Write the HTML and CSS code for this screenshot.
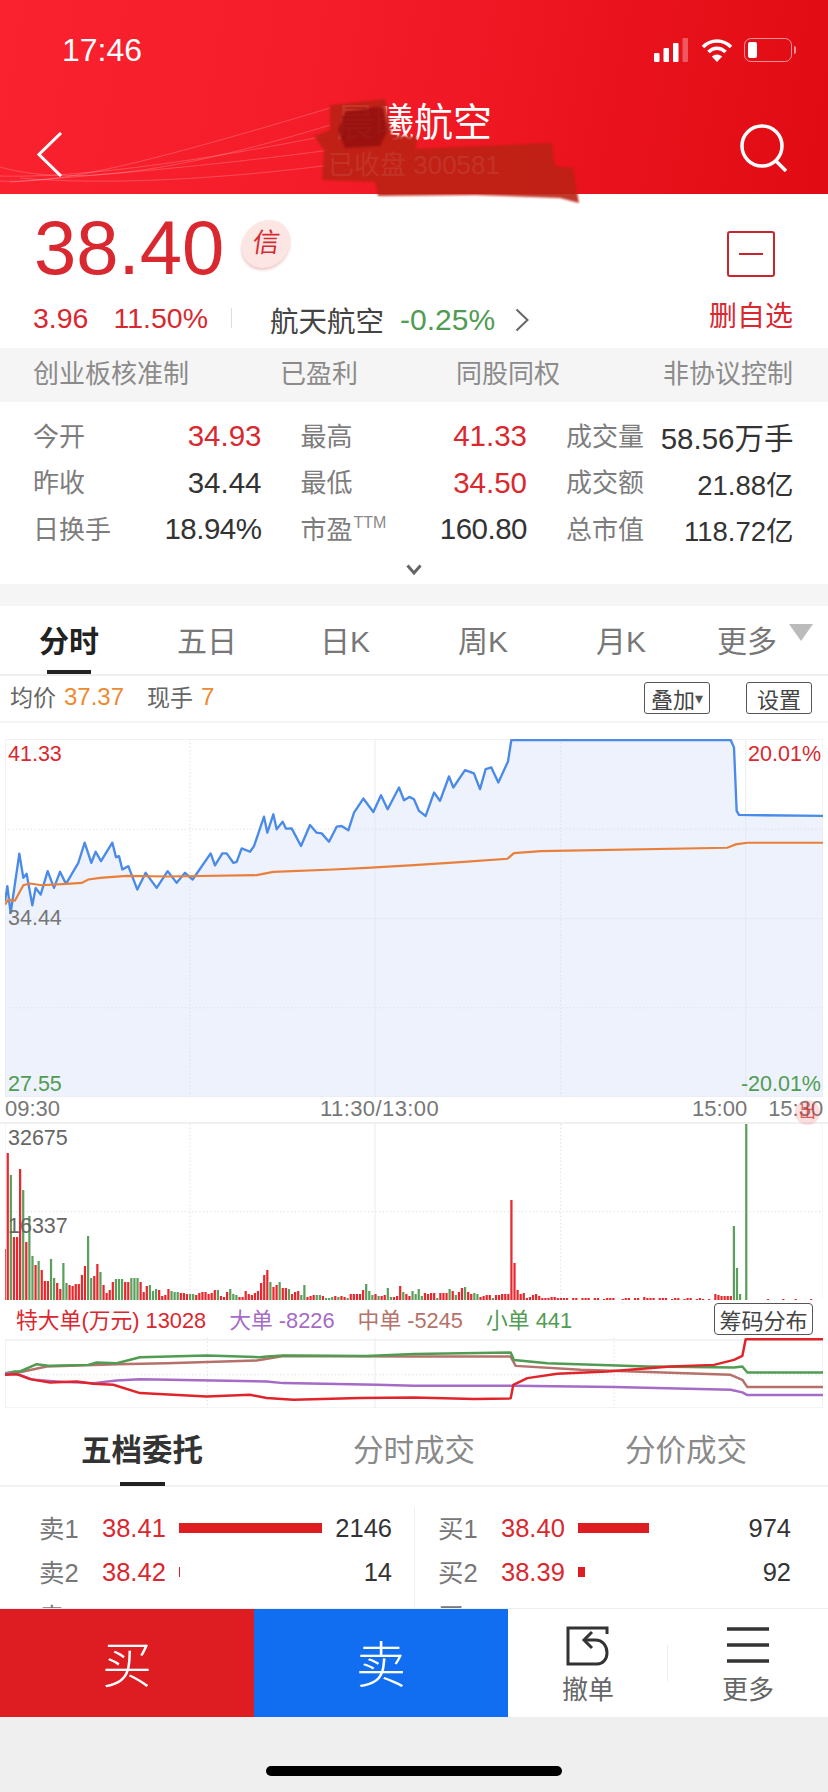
FILE: index.html
```html
<!DOCTYPE html>
<html lang="zh-CN">
<head>
<meta charset="utf-8">
<title>晨曦航空</title>
<link rel="stylesheet" href="styles.css">
</head>
<body>
<div class="page">
  <header class="hero">
    <svg class="swoosh" viewBox="0 0 828 194" aria-hidden="true">
      <path d="M0 181C60 184 140 165 330 108"/>
      <path d="M0 167C40 178 120 190 330 125"/>
      <path d="M0 176C70 178 180 165 330 135"/>
      <path d="M10 182C90 176 220 165 330 150"/>
      <path d="M20 178C110 186 230 178 330 165"/>
    </svg>
    <div class="status">
      <span class="clock">17:46</span>
      <div class="status-icons">
        <svg class="signal" width="36" height="24" viewBox="0 0 36 24"><rect x="0" y="15" width="5.5" height="9" rx="1"/><rect x="9.5" y="10" width="5.5" height="14" rx="1"/><rect x="19" y="5" width="5.5" height="19" rx="1"/><rect class="dim" x="28.5" y="0" width="5.5" height="24" rx="1"/></svg>
        <svg class="wifi" width="32" height="24" viewBox="0 0 32 24"><path d="M2 9C10 1 22 1 30 9"/><path d="M7.5 14C12.500 9 19.500 9 24.500 14"/><path class="wifi-dot" d="M16 24L10.800 18.500C14 15.800 18 15.800 21.200 18.500Z"/></svg>
        <div class="battery"><div class="battery-level"></div></div>
      </div>
    </div>
    <nav class="nav">
      <svg class="back" width="26" height="45" viewBox="0 0 26 45"><path d="M24 1L2 22.500L24 44"/></svg>
      <div class="title-block">
        <div class="title">晨曦航空</div>
        <div class="subtitle">已收盘 300581</div>
      </div>
      <svg class="search" width="48" height="48" viewBox="0 0 48 48"><circle cx="22" cy="22" r="20"/><path d="M35 36L46 47"/></svg>
    </nav>
    <svg class="scribble" viewBox="0 0 828 210" aria-hidden="true">
      <path class="ink-a" d="M330 105L385 99L392 135L417 137L416 149L385 150L552 143L555 166L573 168L579 203L560 198L476 195L378 196L375 182L322 180L324 150L314 136L330 130Z"/>
      <path class="ink-b" d="M345 112L382 106L388 130L380 146L345 148L338 130Z"/>
    </svg>
  </header>

  <section class="quote">
    <div class="quote-main">
      <div class="price-line">
        <span class="price">38.40</span>
        <span class="badge">信</span>
      </div>
      <div class="change-line">
        <span class="chg">3.96</span>
        <span class="chg">11.50%</span>
        <i class="vline"></i>
        <span class="sector">航天航空</span>
        <span class="sector-chg">-0.25%</span>
        <svg class="more-chev" width="14" height="24" viewBox="0 0 14 24"><path d="M1.500 1.500L12.500 12L1.500 22.500"/></svg>
      </div>
    </div>
    <div class="watch">
      <div class="watch-box"><i></i></div>
      <span>删自选</span>
    </div>
  </section>

  <section class="tags">
    <span>创业板核准制</span><span>已盈利</span><span>同股同权</span><span>非协议控制</span>
  </section>

  <section class="stats">
    <div class="stat"><label>今开</label><b class="up">34.93</b></div>
    <div class="stat"><label>最高</label><b class="up">41.33</b></div>
    <div class="stat"><label>成交量</label><b>58.56万手</b></div>
    <div class="stat"><label>昨收</label><b>34.44</b></div>
    <div class="stat"><label>最低</label><b class="up">34.50</b></div>
    <div class="stat"><label>成交额</label><b class="small-val">21.88亿</b></div>
    <div class="stat"><label>日换手</label><b class="tight">18.94%</b></div>
    <div class="stat"><label>市盈<sup>TTM</sup></label><b class="tight">160.80</b></div>
    <div class="stat"><label>总市值</label><b class="small-val">118.72亿</b></div>
  </section>
  <div class="expand"><svg width="16" height="11" viewBox="0 0 16 11"><path d="M1.500 1.500L8 9L14.500 1.500"/></svg></div>
  <div class="band"></div>

  <section class="tabs">
    <span class="tab active">分时</span><span class="tab">五日</span><span class="tab">日K</span><span class="tab">周K</span><span class="tab">月K</span>
    <span class="tab tab-more">更多<i class="tri"></i></span>
  </section>

  <section class="info">
    <span class="info-label">均价</span><span class="orange">37.37</span>
    <span class="info-label info-gap">现手</span><span class="orange">7</span>
    <span class="btn btn-first">叠加<small>▾</small></span>
    <span class="btn btn-second">设置</span>
  </section>

  <section class="price-chart">
    <svg viewBox="15 25 2454 1070" preserveAspectRatio="none">
      <path class="area" d="M15 1095V510L22 465L32 545L58 368L70 440L80 428L97 522L107 470L122 490L143 420L162 470L180 422L198 458L235 395L254 335L274 395L287 362L303 390L337 335L348 378L357 375L367 415L385 405L412 475L437 425L470 470L503 420L530 455L555 425L578 445L632 367L645 403L667 367L680 367L700 395L710 392L725 352L750 362L762 345L792 257L802 305L820 250L830 295L848 272L858 293L875 292L903 345L930 282L950 305L965 307L987 332L1010 287L1025 285L1045 298L1062 245L1090 203L1120 243L1143 193L1163 235L1197 170L1212 208L1228 198L1242 205L1257 240L1277 255L1302 185L1320 210L1347 137L1360 170L1395 118L1422 128L1440 175L1457 115L1474 110L1495 155L1524 92L1534 28L2192 28L2202 50L2210 240L2217 252L2469 255V1095Z"/>
      <path class="grid-dot" d="M570 25V1095M1682 25V1095M15 295H2469M15 828H2469"/>
      <path class="grid-solid" d="M1125 25V1095M2237 25V1095M15 562H2469"/>
      <rect class="frame" x="15" y="25" width="2454" height="1070"/>
      <path class="line-blue" d="M15 510L22 465L32 545L58 368L70 440L80 428L97 522L107 470L122 490L143 420L162 470L180 422L198 458L235 395L254 335L274 395L287 362L303 390L337 335L348 378L357 375L367 415L385 405L412 475L437 425L470 470L503 420L530 455L555 425L578 445L632 367L645 403L667 367L680 367L700 395L710 392L725 352L750 362L762 345L792 257L802 305L820 250L830 295L848 272L858 293L875 292L903 345L930 282L950 305L965 307L987 332L1010 287L1025 285L1045 298L1062 245L1090 203L1120 243L1143 193L1163 235L1197 170L1212 208L1228 198L1242 205L1257 240L1277 255L1302 185L1320 210L1347 137L1360 170L1395 118L1422 128L1440 175L1457 115L1474 110L1495 155L1524 92L1534 28L2192 28L2202 50L2210 240L2217 252L2469 255"/>
      <path class="line-orange" d="M15 520L25 505L45 508L70 462L90 457L125 462L200 458L245 455L265 445L300 440L380 434L500 436L770 432L820 422L1000 415L1100 410L1190 405L1242 402L1392 392L1522 383L1542 366L1622 360L2182 350L2207 340L2242 335L2469 335"/>
    </svg>
    <span class="axis-l top up">41.33</span>
    <span class="axis-l mid grey">34.44</span>
    <span class="axis-l bot green">27.55</span>
    <span class="axis-r top up">20.01%</span>
    <span class="axis-r bot green">-20.01%</span>
  </section>

  <section class="times">
    <span>09:30</span><span class="t-mid">11:30/13:00</span><span class="t-end">15:00</span><span class="t-close">15:30</span>
    <i class="touch">出</i>
  </section>

  <section class="volume-chart">
    <svg viewBox="15 42 2454 528" preserveAspectRatio="none">
      <path class="grid-dot" d="M570 42V570M1682 42V570M15 305H2469"/>
      <path class="grid-solid" d="M1125 42V570"/>
      <path class="frame-open" d="M15 42V570M2469 42V570"/>
      <g transform="translate(14 570) scale(9.27 -3)">
        <path class="bar-red" d="M0 0V51M1 0V147M3 0V63M4 0V63M5 0V131M7 0V58M10 0V35M12 0V30M13 0V19M14 0V19M17 0V17M18 0V11M21 0V15M22 0V14M23 0V16M24 0V16M25 0V25M26 0V34M29 0V24M30 0V36M32 0V15M33 0V7M34 0V10M35 0V18M39 0V18M40 0V18M44 0V18M45 0V8M46 0V14M50 0V10M51 0V4M52 0V5M53 0V11M57 0V7M58 0V7M59 0V6M62 0V5M63 0V7M64 0V8M65 0V8M66 0V6M67 0V7M68 0V10M70 0V4M71 0V3M72 0V8M76 0V3M77 0V3M78 0V9M79 0V6M80 0V5M81 0V7M82 0V9M83 0V17M84 0V25M85 0V30M87 0V13M88 0V15M90 0V12M91 0V12M93 0V6M94 0V8M95 0V9M98 0V3M99 0V4M100 0V5M103 0V4M107 0V4M109 0V4M110 0V3M112 0V6M113 0V6M114 0V6M115 0V6M116 0V10M120 0V6M122 0V4M123 0V5M126 0V3M127 0V4M128 0V14M130 0V6M131 0V4M136 0V7M137 0V6M138 0V7M139 0V7M141 0V7M142 0V7M143 0V7M145 0V9M147 0V8M148 0V12M150 0V8M151 0V6M154 0V3M155 0V4M156 0V5M157 0V5M159 0V5M160 0V5M161 0V6M162 0V6M163 0V6M164 0V100M165 0V37M166 0V10M167 0V6M168 0V7M169 0V2M170 0V3M171 0V5M172 0V6M173 0V4M174 0V2M175 0V2M176 0V2M177 0V3M178 0V3M179 0V2M180 0V2M181 0V2M182 0V2M184 0V2M185 0V2M187 0V2M188 0V2M189 0V2M191 0V2M192 0V2M194 0V1M195 0V2M196 0V2M197 0V2M200 0V1M201 0V2M202 0V2M204 0V2M205 0V2M207 0V3M208 0V2M209 0V2M210 0V2M212 0V2M213 0V2M214 0V2M216 0V1M217 0V2M218 0V2M220 0V1M221 0V2M222 0V2M224 0V1M225 0V2M226 0V1M228 0V1M230 0V6M231 0V5M232 0V4M233 0V4M234 0V4M235 0V4M247 0V1M252 0V1M256 0V1M261 0V1"/>
        <path class="bar-green" d="M2 0V125M6 0V110M8 0V84M9 0V44M11 0V39M15 0V41M16 0V22M19 0V37M20 0V17M27 0V64M28 0V22M31 0V28M36 0V21M37 0V21M38 0V21M41 0V22M42 0V22M43 0V22M47 0V15M48 0V9M49 0V11M54 0V9M55 0V8M56 0V8M60 0V6M61 0V6M69 0V10M73 0V11M74 0V6M75 0V5M86 0V18M89 0V18M92 0V11M96 0V5M97 0V15M101 0V5M102 0V5M104 0V2M105 0V2M106 0V3M108 0V3M111 0V2M117 0V16M118 0V9M119 0V5M121 0V4M124 0V12M125 0V3M129 0V8M132 0V9M133 0V6M134 0V11M135 0V4M140 0V2M144 0V11M146 0V5M149 0V13M152 0V7M153 0V6M158 0V2M236 0V74M237 0V32M238 0V6M240 0V176"/>
      </g>
    </svg>
    <span class="vol-label vol-top">32675</span>
    <span class="vol-label vol-mid">16337</span>
  </section>

  <section class="flow-legend">
    <span class="up">特大单(万元) 13028</span>
    <span class="purple">大单 -8226</span>
    <span class="brown">中单 -5245</span>
    <span class="green">小单 441</span>
    <span class="btn btn-chip">筹码分布</span>
  </section>

  <section class="flow-chart">
    <svg viewBox="15 684 2454 211" preserveAspectRatio="none">
      <path class="grid-dot" d="M622 684V895M1842 684V895M15 795H2469"/>
      <path class="grid-solid" d="M1125 684V895"/>
      <rect class="frame" x="15" y="690" width="2454" height="205"/>
      <path class="f-brown" d="M15 795L70 785L140 770L350 763L500 760L770 752L850 738L1242 740L1532 740L1547 768L1742 780L2192 795L2227 810L2242 832L2469 832"/>
      <path class="f-green" d="M15 790L45 785L60 785L110 763L150 768L265 765L290 758L350 760L420 742L620 737L780 742L800 740L850 737L1100 738L1242 732L1532 728L1542 750L1642 760L1942 770L2202 773L2227 770L2242 788L2469 788"/>
      <path class="f-purple" d="M15 790L60 795L100 810L200 817L280 820L350 812L420 808L800 815L850 820L1130 825L1242 828L1542 828L1842 832L2192 840L2227 848L2242 856L2469 856"/>
      <path class="f-red" d="M15 795L50 793L90 808L150 818L230 815L280 822L340 825L420 850L620 860L750 855L800 865L880 870L1080 865L1242 863L1422 868L1532 866L1540 825L1582 805L1672 792L1822 785L2012 770L2142 765L2202 750L2227 738L2237 688L2469 688"/>
    </svg>
  </section>

  <section class="book-tabs">
    <span class="book-tab active">五档委托</span><span class="book-tab">分时成交</span><span class="book-tab">分价成交</span>
  </section>

  <section class="book">
    <div class="book-side">
      <div class="level"><label>卖1</label><span class="lvl-price">38.41</span><div class="track"><i style="width:143px"></i></div><b>2146</b></div>
      <div class="level"><label>卖2</label><span class="lvl-price">38.42</span><div class="track"><i style="width:1px"></i></div><b>14</b></div>
      <div class="level"><label>卖3</label></div>
    </div>
    <div class="book-side side-right">
      <div class="level"><label>买1</label><span class="lvl-price">38.40</span><div class="track"><i style="width:71px"></i></div><b>974</b></div>
      <div class="level"><label>买2</label><span class="lvl-price">38.39</span><div class="track"><i style="width:7px"></i></div><b>92</b></div>
      <div class="level"><label>买3</label></div>
    </div>
  </section>

  <footer class="actions">
    <div class="trade buy">买</div>
    <div class="trade sell">卖</div>
    <div class="tools">
      <div class="tool tool-undo">
        <svg width="44" height="40" viewBox="0 0 44 40"><path d="M41 8V2H2V38H31"/><path d="M26 6L18 14L26 22"/><path d="M18 14H29C37 14 41 20 41 27C41 33 37 38 31 38"/></svg>
        <span>撤单</span>
      </div>
      <i class="tool-sep"></i>
      <div class="tool tool-more">
        <svg width="44" height="40" viewBox="0 0 44 40"><path d="M1 3H43M1 19H43M1 35H43"/></svg>
        <span>更多</span>
      </div>
    </div>
  </footer>
  <div class="home"><i></i></div>
</div>
</body>
</html>
```

FILE: styles.css
```css
* { box-sizing: border-box; }
html, body { margin: 0; padding: 0; background: #fff; }
body { font-family: "Liberation Sans", "Noto Sans CJK SC", sans-serif; color: #333; }
i { display: block; font-style: normal; }
label { display: block; }

.page { width: 828px; height: 1792px; overflow: hidden; position: relative; display: flex; flex-direction: column; }
.up { color: #d9282f; }
.green { color: #4f9c52; }
.grey { color: #777; }
.purple { color: #a56bc6; }
.brown { color: #b5726a; }
.orange { color: #ee8a30; }

/* header */
.hero { height: 194px; flex: none; position: relative; background: linear-gradient(100deg, #fb2230 0%, #f51c29 40%, #e00b13 100%); color: #fff; }
.swoosh { position: absolute; inset: 0; width: 828px; height: 194px; }
.swoosh path { fill: none; stroke: rgba(255,255,255,.2); stroke-width: 1; }
.status { height: 100px; display: flex; align-items: center; justify-content: space-between; padding: 0 36px 0 62px; position: relative; }
.clock { font-size: 32px; line-height: 1; }
.status-icons { display: flex; align-items: center; gap: 11px; }
.signal { fill: #fff; }
.signal .dim { opacity: .3; }
.wifi { fill: none; stroke: #fff; stroke-width: 3.6; }
.wifi .wifi-dot { fill: #fff; stroke: none; }
.battery { position: relative; width: 48px; height: 24px; border: 1.500px solid rgba(255,255,255,.55); border-radius: 7px; padding: 3px; }
.battery::after { content: ""; position: absolute; right: -5px; top: 7px; width: 2px; height: 8px; background: rgba(255,255,255,.55); border-radius: 0 2px 2px 0; }
.battery-level { width: 9px; height: 100%; background: #fff; border-radius: 2px; }
.nav { display: grid; grid-template-columns: 112px 1fr 118px; align-items: start; position: relative; padding-left: 37px; }
.back { fill: none; stroke: #fff; stroke-width: 3; margin-top: 32px; }
.search { fill: none; stroke: #fff; stroke-width: 3.500; margin-top: 24px; margin-left: 30px; }
.title-block { text-align: center; margin-left: -37px; margin-right: -6px; }
.title { font-size: 39px; line-height: 44px; margin-top: 1px; }
.subtitle { font-size: 26px; line-height: 30px; margin-top: 5px; color: rgba(255,255,255,.8); }
.scribble { position: absolute; left: 0; top: 0; width: 828px; height: 210px; z-index: 2; pointer-events: none; filter: blur(1px); }
.ink-a { fill: #bb2114; opacity: .9; }
.ink-b { fill: #8f0d0f; opacity: .75; }

/* quote */
.quote { height: 154px; flex: none; display: flex; justify-content: space-between; padding: 0 35px 0 33px; }
.price-line { display: flex; align-items: center; height: 100px; }
.price { font-size: 76px; line-height: 1; color: #d9282f; margin-left: 1px; margin-top: 8px; }
.badge { width: 48px; height: 48px; border-radius: 50%; margin-left: 18px; background: #fce6e4; box-shadow: 0 2px 3px rgba(200,90,90,.35); color: #d42c32; font-size: 27px; line-height: 46px; text-align: center; transform: skewX(-8deg); }
.change-line { display: flex; align-items: center; height: 40px; margin-top: 4px; }
.chg { font-size: 28.500px; color: #d9282f; margin-right: 25px; }
.vline { width: 1px; height: 20px; background: #ddd; margin: 0 38px 0 -2px; }
.sector { font-size: 28.500px; color: #444; margin: 3px 16px 0 0; }
.sector-chg { font-size: 30px; color: #4f9c52; margin: 3px 20px 0 0; }
.more-chev { fill: none; stroke: #666; stroke-width: 2; margin-top: 3px; }
.watch { width: 84px; display: flex; flex-direction: column; align-items: center; color: #d9282f; font-size: 28px; line-height: 40px; }
.watch-box { width: 48px; height: 46px; margin-top: 37px; border: 2px solid #c9252c; border-radius: 3px; display: flex; align-items: center; justify-content: center; }
.watch-box i { width: 24px; height: 2.500px; background: #c9252c; }
.watch span { margin-top: 20px; white-space: nowrap; }

.tags { height: 54px; flex: none; background: #f5f5f5; display: flex; align-items: center; padding: 0 0 8px 33px; color: #8b8b8b; font-size: 26px; }
.tags span:nth-child(2) { margin-left: 91px; }
.tags span:nth-child(3) { margin-left: 98px; }
.tags span:nth-child(4) { margin-left: 103px; }

.stats { flex: none; display: grid; grid-template-columns: 228.500px 226.500px 227.500px; column-gap: 39px; grid-auto-rows: 46.500px; padding: 11px 0 0 33px; }
.stat { display: flex; align-items: center; justify-content: space-between; white-space: nowrap; }
.stat label { font-size: 26px; color: #7d7d7d; margin-top: -4px; }
.stat b { font-weight: 400; font-size: 29.500px; color: #333; }
.stat b.up { color: #d9282f; }
.stat b.tight { letter-spacing: -.5px; }
.stat b.small-val { font-size: 27.500px; }
.stat sup { font-size: 16px; line-height: 0; vertical-align: 11px; color: #8a8a8a; margin-left: 1px; }
.expand { height: 31px; flex: none; display: flex; justify-content: center; padding-top: 11px; }
.expand svg { fill: none; stroke: #666; stroke-width: 3; }
.band { height: 22px; flex: none; background: #f5f5f5; }

.tabs { height: 70px; flex: none; display: grid; grid-template-columns: repeat(6, 138px); border-bottom: 2px solid #eee; }
.tab { position: relative; display: flex; align-items: center; justify-content: center; padding-bottom: 2px; font-size: 30px; color: #777; }
.tab.active { color: #222; font-weight: 700; }
.tab.active::after { content: ""; position: absolute; left: 47px; bottom: 0; width: 44px; height: 4px; background: #222; }
.tab-more { padding-left: 12px; }
.tri { width: 0; height: 0; border-left: 12px solid transparent; border-right: 12px solid transparent; border-top: 17px solid #bbb; margin: -12px 0 0 12px; }

.info { height: 47px; flex: none; display: flex; align-items: center; padding-left: 10px; font-size: 24px; color: #666; border-bottom: 2px solid #f5f5f5; }
.info-label { font-size: 23px; margin-top: -4px; }
.info .orange { margin-left: 8px; margin-top: -2px; }
.info-gap { margin-left: 23px; }
.btn { display: flex; align-items: center; justify-content: center; border: 1px solid #555; border-radius: 3px; color: #444; font-size: 22px; height: 32px; }
.btn small { font-size: 16px; color: #555; }
.btn-first { width: 66px; margin-left: auto; }
.btn-second { width: 66px; margin-left: 36px; margin-right: 16px; }

.price-chart { height: 358px; flex: none; margin: 16px 5px 0; position: relative; }
.price-chart svg, .volume-chart svg, .flow-chart svg { display: block; width: 100%; height: 100%; }
.area { fill: #edf2fc; }
.grid-dot { fill: none; stroke: #dcdfe6; stroke-width: 3; stroke-dasharray: 4 7; }
.grid-solid { fill: none; stroke: #e3e7ef; stroke-width: 2.500; }
.frame { fill: none; stroke: #e8e8ec; stroke-width: 3; }
.frame-open { fill: none; stroke: #eee; stroke-width: 3; }
.line-blue { fill: none; stroke: #4a8ae8; stroke-width: 7; stroke-linejoin: round; }
.line-orange { fill: none; stroke: #e97f3a; stroke-width: 6.500; }
.axis-l, .axis-r { position: absolute; font-size: 21.500px; line-height: 24px; }
.axis-l { left: 3px; }
.axis-r { right: 2px; }
.top { top: 3px; }
.mid { top: 167px; }
.bot { top: 333px; }

.times { height: 27px; flex: none; position: relative; display: flex; align-items: center; font-size: 22px; color: #777; padding-left: 5px; border-bottom: 2px solid #f0f0f0; }
.t-mid { margin-left: 260px; letter-spacing: .4px; }
.t-end { margin-left: 253px; }
.t-close { margin-left: 21px; }
.touch { position: absolute; left: 795px; top: 3px; width: 25px; height: 25px; border-radius: 50%; background: rgba(236,90,90,.2); color: rgba(214,50,50,.75); font-size: 17px; line-height: 23px; text-align: center; }

.volume-chart { height: 176px; flex: none; margin: 0 5px; position: relative; }
.bar-red, .bar-green { fill: none; stroke-width: .72; }
.bar-red { stroke: #e7282c; }
.bar-green { stroke: #5b9f5c; }
.vol-label { position: absolute; left: 3px; font-size: 21.500px; line-height: 24px; color: #666; }
.vol-top { top: 2px; }
.vol-mid { top: 90px; }

.flow-legend { height: 38px; flex: none; position: relative; display: flex; align-items: center; font-size: 21.800px; padding-left: 16px; gap: 23px; white-space: nowrap; }
.btn-chip { position: absolute; left: 714px; top: 3px; width: 99px; height: 32px; font-size: 22px; margin: 0; border-radius: 4px; }

.flow-chart { height: 70px; flex: none; margin: 0 5px; }
.f-brown, .f-green, .f-purple, .f-red { fill: none; stroke-width: 7.500; stroke-linejoin: round; }
.f-brown { stroke: #b5716a; }
.f-green { stroke: #4f9c52; }
.f-purple { stroke: #a56bc6; }
.f-red { stroke: #e1242a; }

.book-tabs { height: 79px; flex: none; display: grid; grid-template-columns: repeat(3, 272px); padding-left: 6px; padding-top: 4px; border-bottom: 2px solid #f2f2f2; }
.book-tab { position: relative; display: flex; align-items: center; justify-content: center; font-size: 30.500px; color: #8a8a8a; }
.book-tab.active { color: #333; font-weight: 700; }
.book-tab.active::after { content: ""; position: absolute; left: 114px; bottom: -1px; width: 45px; height: 4px; background: #222; }

.book { height: 121px; flex: none; display: flex; overflow: hidden; padding-top: 20px; }
.book-side { width: 414px; padding: 0 22px 0 39px; display: flex; flex-direction: column; }
.side-right { border-left: 1px solid #f0f0f0; padding: 0 37px 0 23px; }
.level { height: 44px; flex: none; display: flex; align-items: center; font-size: 25.500px; }
.level label { width: 63px; color: #777; margin-top: -4px; }
.lvl-price { width: 77px; color: #d9282f; }
.track { flex: 1; }
.track i { height: 10px; background: #dd1d21; margin-top: -2px; }
.level b { font-weight: 400; color: #333; }

.actions { height: 109px; flex: none; display: flex; border-top: 1px solid #eee; }
.trade { width: 254px; display: flex; align-items: center; justify-content: center; color: #fff; font-size: 50px; font-weight: 300; padding-bottom: 4px; }
.buy { background: #dd1d21; }
.sell { background: #126ef0; }
.tools { flex: 1; display: flex; align-items: stretch; position: relative; background: #fff; }
.tool { display: flex; flex-direction: column; align-items: center; font-size: 26px; color: #666; line-height: 30px; padding-top: 17px; width: 160px; }
.tool svg { fill: none; stroke: #333; stroke-width: 3; margin-bottom: 9px; }
.tool-sep { width: 1px; height: 36px; background: #eee; align-self: center; margin-left: -1px; }
.tool-more svg { stroke-width: 3.500; }
.home { flex: 1; background: #efefef; display: flex; justify-content: center; padding-top: 49px; }
.home i { width: 296px; height: 10px; border-radius: 5px; background: #000; }
```
